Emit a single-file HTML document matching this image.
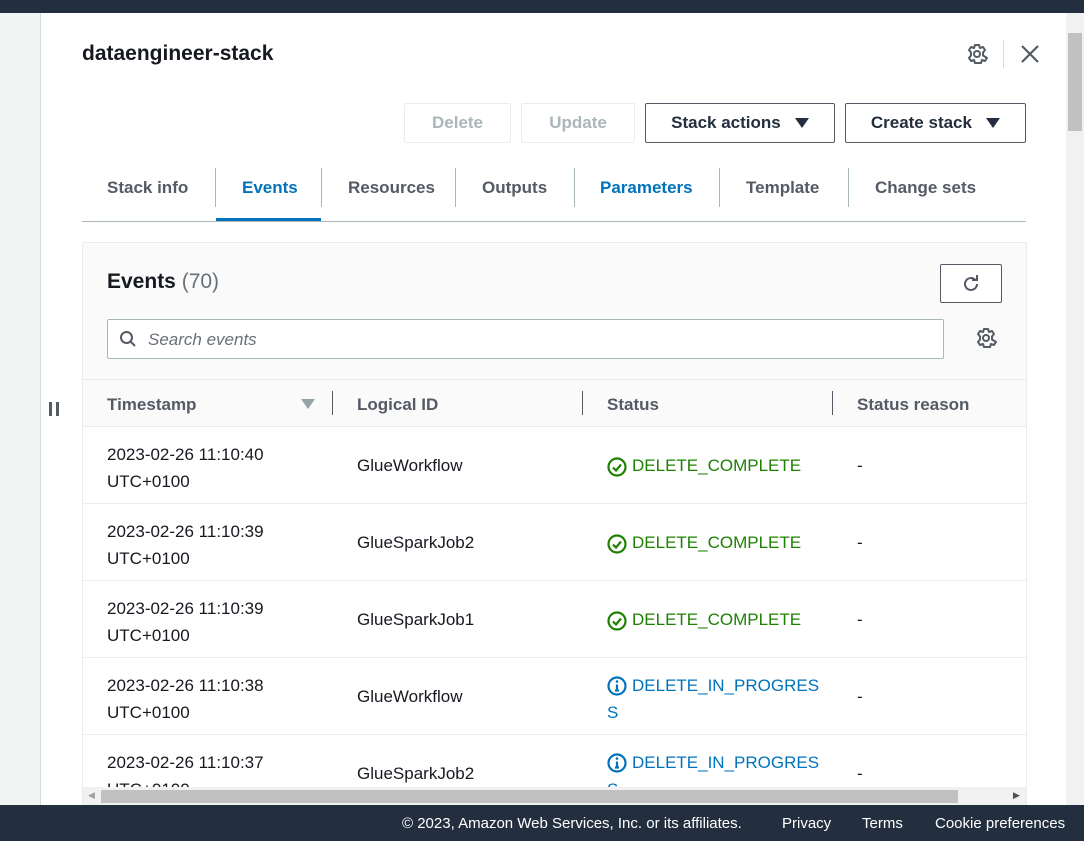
<!DOCTYPE html>
<html><head><meta charset="utf-8"><style>
*{box-sizing:border-box;margin:0;padding:0}
body{width:1084px;height:841px;overflow:hidden;font-family:"Liberation Sans",sans-serif;background:#fff;position:relative;color:#16191f}
.abs{position:absolute}
.top{left:0;top:0;width:1084px;height:13px;background:#232f3e}
.left{left:0;top:13px;width:41px;height:792px;background:#f2f3f3;border-right:1px solid #d5dbdb}
.sb{left:1066px;top:13px;width:18px;height:792px;background:#f1f1f1}
.foot{left:0;top:805px;width:1084px;height:36px;background:#232f3e;color:#fff;font-size:15px}
.foot span{position:absolute;top:10px}
h1{position:absolute;left:82px;top:42px;font-size:21px;font-weight:bold;color:#16191f}
.btn{position:absolute;top:103px;height:40px;border:1px solid #545b64;border-radius:2px;font-size:17px;font-weight:bold;color:#545b64;display:flex;align-items:center;justify-content:center;background:#fff}
.dis{border-color:#eaeded;color:#aab7b8}
.tab{position:absolute;top:178px;font-size:17px;font-weight:bold;color:#545b64}
.sep{position:absolute;top:168px;width:1px;height:39px;background:#aab7b8}
.panel{left:82px;top:242px;width:945px;height:563px;border:1px solid #eaeded;border-bottom:none;background:#fff;overflow:hidden}
.hd{left:0;top:0;width:945px;height:184px;background:#fafafa;border-bottom:1px solid #eaeded}
.row{position:absolute;left:0;width:945px;height:77px;border-bottom:1px solid #eaeded;font-size:17px}
.row .c{position:absolute}
.g{color:#1d8102}.b{color:#0073bb}
.ic{position:absolute;left:0;top:1px}
.st{padding-left:25px}
</style></head><body>
<div class="abs top"></div>
<div class="abs left"></div>
<div class="abs" style="left:49px;top:402px;width:3px;height:14px;background:#545b64"></div>
<div class="abs" style="left:56px;top:402px;width:3px;height:14px;background:#545b64"></div>
<div class="abs sb"><div style="position:absolute;left:2px;top:20px;width:14px;height:98px;background:#c1c1c1"></div></div>
<h1>dataengineer-stack</h1>
<svg class="abs" style="left:966px;top:43px" width="22" height="22" viewBox="0 0 22 22"><circle cx="11" cy="11" r="3" fill="none" stroke="#545b64" stroke-width="2"/><path d="M9 2h4l1 3 3-1 2 3-2 2.5v3L21 15l-2 3-3-1-1 3H9l-1-3-3 1-2-3 2-2.5v-3L3 7l2-3 3 1z" fill="none" stroke="#545b64" stroke-width="2" stroke-linejoin="round"/></svg>
<div class="abs" style="left:1003px;top:40px;width:1px;height:28px;background:#d5dbdb"></div>
<svg class="abs" style="left:1020px;top:44px" width="20" height="20"><path d="M2 2L18 18M18 2L2 18" stroke="#545b64" stroke-width="2.2"/></svg>
<div class="btn dis" style="left:404px;width:107px">Delete</div>
<div class="btn dis" style="left:521px;width:114px">Update</div>
<div class="btn" style="left:645px;width:190px;color:#232f3e">Stack actions&nbsp;&nbsp;&nbsp;<svg width="14" height="10"><path d="M0 0H14L7 10z" fill="#232f3e"/></svg></div>
<div class="btn" style="left:845px;width:181px;color:#232f3e">Create stack&nbsp;&nbsp;&nbsp;<svg width="14" height="10"><path d="M0 0H14L7 10z" fill="#232f3e"/></svg></div>
<div class="tab" style="left:107px">Stack info</div>
<div class="sep" style="left:215px"></div>
<div class="tab" style="left:242px;color:#0073bb">Events</div>
<div class="abs" style="left:216px;top:218px;width:105px;height:4px;background:#0073bb"></div>
<div class="sep" style="left:321px"></div>
<div class="tab" style="left:348px">Resources</div>
<div class="sep" style="left:455px"></div>
<div class="tab" style="left:482px">Outputs</div>
<div class="sep" style="left:574px"></div>
<div class="tab" style="left:600px;color:#0073bb">Parameters</div>
<div class="sep" style="left:719px"></div>
<div class="tab" style="left:746px">Template</div>
<div class="sep" style="left:848px"></div>
<div class="tab" style="left:875px">Change sets</div>
<div class="abs" style="left:82px;top:221px;width:944px;height:1px;background:#aab7b8"></div>
<div class="abs panel">
 <div class="abs hd">
  <div class="abs" style="left:24px;top:27px;font-size:21px;font-weight:bold">Events <span style="font-weight:normal;color:#687078">(70)</span></div>
  <div class="abs" style="left:857px;top:21px;width:62px;height:39px;border:1px solid #545b64;border-radius:2px;background:#fff"><svg style="position:absolute;left:20px;top:9px" width="20" height="20"><path d="M16 10a6 6 0 1 1-2-4.5" fill="none" stroke="#545b64" stroke-width="2"/><path d="M11 4h5V-1" transform="translate(0,2)" fill="none" stroke="#545b64" stroke-width="2"/></svg></div>
  <div class="abs" style="left:24px;top:76px;width:837px;height:40px;border:1px solid #aab7b8;border-radius:2px;background:#fff">
   <svg style="position:absolute;left:11px;top:10px" width="18" height="18"><circle cx="7.5" cy="7.5" r="5.5" fill="none" stroke="#545b64" stroke-width="2"/><path d="M11.5 11.5L16 16" stroke="#545b64" stroke-width="2"/></svg>
   <span style="position:absolute;left:40px;top:10px;font-style:italic;color:#687078;font-size:17px">Search events</span>
  </div>
  <svg style="position:absolute;left:892px;top:84px" width="22" height="22" viewBox="0 0 22 22"><circle cx="11" cy="11" r="3" fill="none" stroke="#545b64" stroke-width="2"/><path d="M9 2h4l1 3 3-1 2 3-2 2.5v3L21 15l-2 3-3-1-1 3H9l-1-3-3 1-2-3 2-2.5v-3L3 7l2-3 3 1z" fill="none" stroke="#545b64" stroke-width="2" stroke-linejoin="round"/></svg>
  <div class="abs" style="left:0;top:136px;width:945px;height:1px;background:#eaeded"></div>
  <div class="abs" style="left:24px;top:152px;font-size:17px;font-weight:bold;color:#545b64">Timestamp</div>
  <svg class="abs" style="left:218px;top:156px" width="14" height="10"><path d="M0 0H14L7 10z" fill="#95a5a6"/></svg>
  <div class="abs" style="left:249px;top:148px;width:1px;height:24px;background:#545b64"></div>
  <div class="abs" style="left:274px;top:152px;font-size:17px;font-weight:bold;color:#545b64">Logical ID</div>
  <div class="abs" style="left:499px;top:148px;width:1px;height:24px;background:#545b64"></div>
  <div class="abs" style="left:524px;top:152px;font-size:17px;font-weight:bold;color:#545b64">Status</div>
  <div class="abs" style="left:749px;top:148px;width:1px;height:24px;background:#545b64"></div>
  <div class="abs" style="left:774px;top:152px;font-size:17px;font-weight:bold;color:#545b64">Status reason</div>
 </div>
 <div class="row" style="top:184px"><div class="c" style="left:24px;top:14px;line-height:27px">2023-02-26 11:10:40<br>UTC+0100</div><div class="c" style="left:274px;top:29px">GlueWorkflow</div><div class="c g st" style="left:524px;top:29px"><svg class="ic" width="20" height="20"><circle cx="10" cy="10" r="8.5" fill="none" stroke="#1d8102" stroke-width="2.2"/><path d="M6 10.5l3 3 5-6" fill="none" stroke="#1d8102" stroke-width="2.2"/></svg>DELETE_COMPLETE</div><div class="c" style="left:774px;top:29px">-</div></div>
 <div class="row" style="top:261px"><div class="c" style="left:24px;top:14px;line-height:27px">2023-02-26 11:10:39<br>UTC+0100</div><div class="c" style="left:274px;top:29px">GlueSparkJob2</div><div class="c g st" style="left:524px;top:29px"><svg class="ic" width="20" height="20"><circle cx="10" cy="10" r="8.5" fill="none" stroke="#1d8102" stroke-width="2.2"/><path d="M6 10.5l3 3 5-6" fill="none" stroke="#1d8102" stroke-width="2.2"/></svg>DELETE_COMPLETE</div><div class="c" style="left:774px;top:29px">-</div></div>
 <div class="row" style="top:338px"><div class="c" style="left:24px;top:14px;line-height:27px">2023-02-26 11:10:39<br>UTC+0100</div><div class="c" style="left:274px;top:29px">GlueSparkJob1</div><div class="c g st" style="left:524px;top:29px"><svg class="ic" width="20" height="20"><circle cx="10" cy="10" r="8.5" fill="none" stroke="#1d8102" stroke-width="2.2"/><path d="M6 10.5l3 3 5-6" fill="none" stroke="#1d8102" stroke-width="2.2"/></svg>DELETE_COMPLETE</div><div class="c" style="left:774px;top:29px">-</div></div>
 <div class="row" style="top:415px"><div class="c" style="left:24px;top:14px;line-height:27px">2023-02-26 11:10:38<br>UTC+0100</div><div class="c" style="left:274px;top:29px">GlueWorkflow</div><div class="c b st" style="left:524px;top:14px;line-height:27px"><svg class="ic" style="top:4px" width="20" height="20"><circle cx="10" cy="10" r="8.5" fill="none" stroke="#0073bb" stroke-width="2.2"/><path d="M10 8.5v6M8 14.5h4" stroke="#0073bb" stroke-width="2.2"/><circle cx="10" cy="5.5" r="1.3" fill="#0073bb"/></svg>DELETE_IN_PROGRES<br><span style="margin-left:-25px">S</span></div><div class="c" style="left:774px;top:29px">-</div></div>
 <div class="row" style="top:492px"><div class="c" style="left:24px;top:14px;line-height:27px">2023-02-26 11:10:37<br>UTC+0100</div><div class="c" style="left:274px;top:29px">GlueSparkJob2</div><div class="c b st" style="left:524px;top:14px;line-height:27px"><svg class="ic" style="top:4px" width="20" height="20"><circle cx="10" cy="10" r="8.5" fill="none" stroke="#0073bb" stroke-width="2.2"/><path d="M10 8.5v6M8 14.5h4" stroke="#0073bb" stroke-width="2.2"/><circle cx="10" cy="5.5" r="1.3" fill="#0073bb"/></svg>DELETE_IN_PROGRES<br><span style="margin-left:-25px">S</span></div><div class="c" style="left:774px;top:29px">-</div></div>
 <div class="abs" style="left:0;top:544px;width:945px;height:19px;background:#f1f1f1"><div style="position:absolute;left:18px;top:3px;width:857px;height:13px;background:#c1c1c1"></div><span style="position:absolute;left:5px;top:3px;font-size:9px;color:#a0a0a0">◀</span><span style="position:absolute;left:930px;top:3px;font-size:9px;color:#505050">▶</span></div>
</div>
<div class="abs foot"><span style="left:402px">© 2023, Amazon Web Services, Inc. or its affiliates.</span><span style="left:782px">Privacy</span><span style="left:862px">Terms</span><span style="left:935px">Cookie preferences</span></div>
</body></html>
